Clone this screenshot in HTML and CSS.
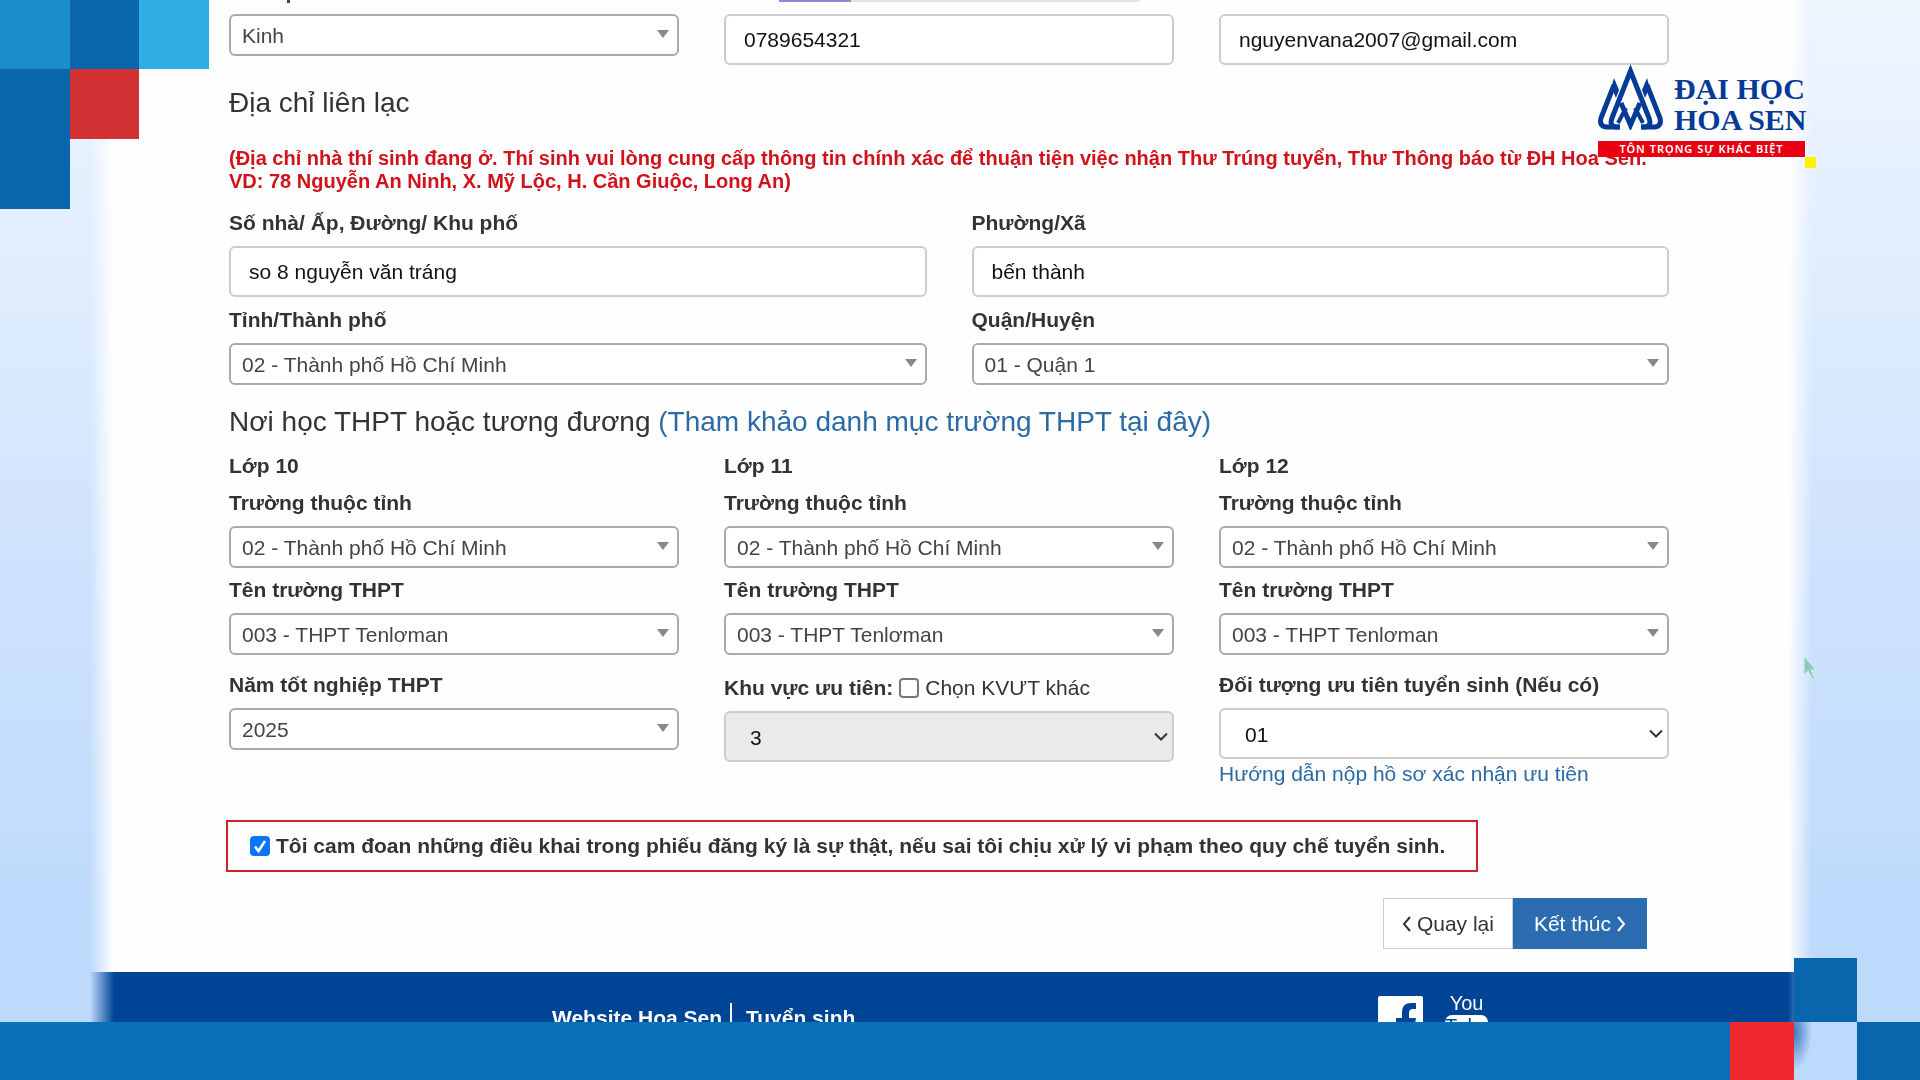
FILE: index.html
```html
<!DOCTYPE html>
<html lang="vi">
<head>
<meta charset="utf-8">
<meta name="viewport" content="width=device-width, initial-scale=1">
<title>Phiếu đăng ký - Đại học Hoa Sen</title>
<link rel="stylesheet" href="styles.css">
</head>
<body>
<div class="stage">
  <div class="panel">
    <form class="form">
      <div class="row three peek" aria-hidden="true">
        <span class="peek-dot"></span>
        <span class="peek-link"></span>
      </div>
      <div class="row three">
        <span class="pick"><select aria-label="Dân tộc"><option>Kinh</option></select></span>
        <input class="box" type="tel" aria-label="Điện thoại" value="0789654321">
        <input class="box" type="email" aria-label="Email" value="nguyenvana2007@gmail.com">
      </div>

      <h4 class="title first">Địa chỉ liên lạc</h4>
      <p class="note">(Địa chỉ nhà thí sinh đang ở. Thí sinh vui lòng cung cấp thông tin chính xác để thuận tiện việc nhận Thư Trúng tuyển, Thư Thông báo từ ĐH Hoa Sen.<br>VD: 78 Nguyễn An Ninh, X. Mỹ Lộc, H. Cần Giuộc, Long An)</p>

      <div class="row two address">
        <div class="field"><label for="street">Số nhà/ Ấp, Đường/ Khu phố</label><input class="box" id="street" type="text" value="so 8 nguyễn văn tráng"></div>
        <div class="field"><label for="ward">Phường/Xã</label><input class="box" id="ward" type="text" value="bến thành"></div>
        <div class="field"><label for="city">Tỉnh/Thành phố</label><span class="pick"><select id="city"><option>02 - Thành phố Hồ Chí Minh</option></select></span></div>
        <div class="field"><label for="district">Quận/Huyện</label><span class="pick"><select id="district"><option>01 - Quận 1</option></select></span></div>
      </div>

      <h4 class="title school">Nơi học THPT hoặc tương đương <a href="#">(Tham khảo danh mục trường THPT tại đây)</a></h4>

      <div class="row three grades">
        <div class="grade">
          <strong class="grade-name">Lớp 10</strong>
          <div class="field"><label for="p10">Trường thuộc tỉnh</label><span class="pick"><select id="p10"><option>02 - Thành phố Hồ Chí Minh</option></select></span></div>
          <div class="field"><label for="s10">Tên trường THPT</label><span class="pick"><select id="s10"><option>003 - THPT Tenlơman</option></select></span></div>
        </div>
        <div class="grade">
          <strong class="grade-name">Lớp 11</strong>
          <div class="field"><label for="p11">Trường thuộc tỉnh</label><span class="pick"><select id="p11"><option>02 - Thành phố Hồ Chí Minh</option></select></span></div>
          <div class="field"><label for="s11">Tên trường THPT</label><span class="pick"><select id="s11"><option>003 - THPT Tenlơman</option></select></span></div>
        </div>
        <div class="grade">
          <strong class="grade-name">Lớp 12</strong>
          <div class="field"><label for="p12">Trường thuộc tỉnh</label><span class="pick"><select id="p12"><option>02 - Thành phố Hồ Chí Minh</option></select></span></div>
          <div class="field"><label for="s12">Tên trường THPT</label><span class="pick"><select id="s12"><option>003 - THPT Tenlơman</option></select></span></div>
        </div>
      </div>

      <div class="row three priority">
        <div class="field"><label for="year">Năm tốt nghiệp THPT</label><span class="pick"><select id="year"><option>2025</option></select></span></div>
        <div class="field area">
          <div class="area-head"><label for="area">Khu vực ưu tiên:</label><input class="tick" id="other" type="checkbox"><label class="plain" for="other">Chọn KVƯT khác</label></div>
          <span class="pick native"><select id="area" disabled><option>3</option></select><svg class="chev" viewBox="0 0 14 9"><path d="M1 1.500 7 7.500 13 1.500"/></svg></span>
        </div>
        <div class="field">
          <label for="object">Đối tượng ưu tiên tuyển sinh (Nếu có)</label>
          <span class="pick native"><select id="object"><option>01</option></select><svg class="chev" viewBox="0 0 14 9"><path d="M1 1.500 7 7.500 13 1.500"/></svg></span>
          <a class="help" href="#">Hướng dẫn nộp hồ sơ xác nhận ưu tiên</a>
        </div>
      </div>

      <div class="pledge"><input class="tick" id="pledge" type="checkbox" checked><label for="pledge">Tôi cam đoan những điều khai trong phiếu đăng ký là sự thật, nếu sai tôi chịu xử lý vi phạm theo quy chế tuyển sinh.</label></div>

      <div class="actions">
        <button class="btn back" type="button"><svg viewBox="0 0 9 16"><path d="M8 1 2 8l6 7"/></svg>Quay lại</button>
        <button class="btn done" type="button">Kết thúc<svg viewBox="0 0 9 16"><path d="m1 1 6 7-6 7"/></svg></button>
      </div>
    </form>
    <footer class="footer">
      <nav class="links"><a href="#">Website Hoa Sen</a><span class="bar"></span><a href="#">Tuyển sinh</a></nav>
      <div class="social">
        <a href="#" aria-label="Facebook"><svg class="fb" viewBox="0 0 45 45"><path fill="#fff" d="M2 0h41q2 0 2 2v41q0 2-2 2H31V28h6l1-6h-7v-5q0-4 4-4h3V7h-5q-9 0-9 9v6h-6v6h6v17H2q-2 0-2-2V2q0-2 2-2z"/></svg></a>
        <a class="yt" href="#"><span class="you">You</span><span class="tube">Tube</span></a>
      </div>
    </footer>
  </div>

  <div class="mosaic" aria-hidden="true">
    <i class="sky"></i><i class="deep"></i><i class="light"></i>
    <i class="deep"></i><i class="red"></i><i></i>
    <i class="deep"></i>
  </div>

  <div class="logo">
    <div class="logo-top">
      <svg class="mark" viewBox="0 0 66 66" aria-hidden="true">
        <g fill="none" stroke="#063a97" stroke-width="5">
          <path d="M22 63h-4Q11 62 14 54L32.500 7 51 54Q54 62 47 63h-4"/>
          <path d="M23 39 32.500 61 42 39"/>
          <path d="M20 59 28 44M45 59 37 44" stroke-width="4"/>
          <path d="M21 63H8Q1 62 3 54L16 21"/>
          <path d="M44 63H57Q64 62 62 54L49 21"/>
        </g>
        <path fill="#063a97" d="M16 14l5 12-3 8-3-7-3 1zM49 14l-5 12 3 8 3-7 3 1z"/>
      </svg>
      <div class="logo-name">ĐẠI HỌC<br>HOA SEN</div>
    </div>
    <div class="motto">TÔN TRỌNG SỰ KHÁC BIỆT</div>
    <i class="dot"></i>
  </div>

  <svg class="cursor" viewBox="0 0 14 26" aria-hidden="true"><path d="M1 1v19l4-4 5 9 2-1-4-9h5z"/></svg>

  <div class="band" aria-hidden="true">
    <i class="band-blue"></i><i class="band-red"></i><i class="band-gap"></i><i class="band-deep"></i>
  </div>
</div>
</body>
</html>
```
FILE: styles.css
```css
* { box-sizing: border-box; }

body {
  margin: 0;
  color: #333;
  font: 21px/30px "Liberation Sans", Arial, sans-serif;
}

a { color: #2c6aa6; text-decoration: none; }
i { display: block; }

.stage {
  position: relative;
  height: 100vh;
  overflow: hidden;
  background: linear-gradient(#eef5ff, #e3effe 20%, #d0e3fd 50%, #bddafc 85%);
}

/* White sheet whose side edges fade into the backdrop */
.panel {
  margin: 0 108px 0 90px;
  background: #fefefe;
  -webkit-mask-image: linear-gradient(90deg, transparent, #000 24px, #000 calc(100% - 24px), transparent);
  mask-image: linear-gradient(90deg, transparent, #000 24px, #000 calc(100% - 24px), transparent);
}

.form { padding: 0 143px 23px 139px; }

.row { display: grid; column-gap: 45px; align-items: start; }
.two { grid-template-columns: 1fr 1fr; row-gap: 8px; }
.three { grid-template-columns: 1fr 1fr 1fr; }

.peek { height: 14px; }
.peek-dot { width: 3px; height: 3px; margin-left: 58px; background: #444; }
.peek-link {
  height: 2px;
  margin: 0 34px 0 55px;
  background: linear-gradient(90deg, #8f88d8 72px, #e4e4e4 72px);
}

.field { display: flex; flex-direction: column; }
label { font-weight: 700; margin-bottom: 8px; align-self: flex-start; }

.box, select {
  width: 100%;
  margin: 0;
  font: inherit;
  background: #fff;
  border-radius: 6px;
}
.box { height: 51px; padding: 0 18px; border: 2px solid #ccc; color: #111; }

.pick { position: relative; display: block; }
.pick::after {
  content: "";
  position: absolute;
  right: 10px;
  top: 16px;
  border: 6px solid transparent;
  border-top: 8px solid #888;
  border-bottom: 0;
}
select {
  display: block;
  appearance: none;
  height: 42px;
  padding: 2px 30px 0 11px;
  border: 2px solid #aaa;
  color: #444;
}
.native::after { content: none; }
.native select { height: 51px; padding-left: 24px; border-color: #ccc; color: #111; opacity: 1; }
.native select:disabled { background: #eaeaea; }
.chev { position: absolute; right: 6px; top: 21px; width: 14px; height: 9px; fill: none; stroke: #333; stroke-width: 2; }

.title { margin: 0; font-size: 28px; font-weight: 400; line-height: 30px; }
.first { margin-top: 23px; }
.note { margin: 29px 0 15px; color: #d0121b; font-size: 20px; font-weight: 700; line-height: 23px; }
.school { margin-top: 22px; }

.grades { margin-top: 14px; }
.grade { display: grid; row-gap: 7px; }
.priority { margin-top: 15px; }
.area { padding-top: 3px; }
.area-head { display: flex; align-items: center; margin-bottom: 8px; }
.area-head label { margin: 0; }
.area-head .plain { font-weight: 400; }

.tick {
  appearance: none;
  flex: none;
  width: 20px;
  height: 20px;
  margin: 0 6px;
  border: 2px solid #777;
  border-radius: 4px;
  background: #fff;
}
.tick:checked {
  border: 0;
  background: #0b76f5 url("data:image/svg+xml,%3Csvg xmlns='http://www.w3.org/2000/svg' viewBox='0 0 20 20'%3E%3Cpath d='M5 10.500 8.500 15 15 5' fill='none' stroke='white' stroke-width='2.500'/%3E%3C/svg%3E");
}

.pledge {
  display: flex;
  align-items: center;
  width: fit-content;
  height: 52px;
  margin: 31px 0 26px -3px;
  padding: 0 31px 0 16px;
  border: 2px solid #d0202a;
}
.pledge label { margin: 0; align-self: center; }

.actions { display: flex; justify-content: flex-end; padding-right: 22px; }
.btn {
  display: flex;
  align-items: center;
  gap: 6px;
  height: 51px;
  padding: 0 18px;
  border: 1px solid #ccc;
  background: #fff;
  color: #333;
  font: inherit;
}
.btn svg { width: 9px; height: 16px; fill: none; stroke: currentColor; stroke-width: 2; }
.done { padding: 0 20px; background: #2c6cb0; border-color: #2c6cb0; color: #fff; }

.footer {
  display: flex;
  justify-content: space-between;
  height: 84px;
  padding: 20px 324px 0 462px;
  background: #004595;
}
.links { display: flex; align-items: flex-start; padding-top: 11px; font-weight: 700; }
.links a { color: #fff; }
.bar { width: 2px; height: 26px; margin: 0 14px 0 8px; background: #fff; }
.social { display: flex; gap: 22px; }
.fb { display: block; width: 45px; height: 45px; margin-top: 4px; }
.yt { display: flex; flex-direction: column; align-items: center; color: #fff; font-size: 20px; line-height: 23px; }
.tube { width: 43px; height: 34px; border-radius: 7px; background: #fff; color: #004595; text-align: center; }

.mosaic {
  position: absolute;
  top: 0;
  left: 0;
  display: grid;
  grid-template-columns: 70px 69px 70px;
  grid-template-rows: 69px 70px 70px;
}
.sky { background: #1a8ccb; }
.deep { background: #0a66ac; }
.light { background: #30ade3; }
.red { background: #d33235; }

.logo { position: absolute; top: 64px; right: 115px; width: 207px; }
.logo-top { display: flex; gap: 10px; height: 77px; }
.mark { width: 66px; height: 66px; flex: none; }
.logo-name { padding-top: 9px; color: #063a97; font: 700 30px/31px "Liberation Serif", serif; white-space: nowrap; }
.motto { height: 16px; background: #e90010; color: #fff; font: 600 11px/16px "Noto Sans", sans-serif; letter-spacing: 1px; text-align: center; white-space: nowrap; }
.dot { width: 11px; height: 11px; margin-left: 207px; background: #fff200; }

.cursor { position: absolute; right: 103px; top: 655px; width: 14px; height: 26px; fill: #8ccbbb; stroke: #d5eef0; }

.band {
  position: absolute;
  left: 0;
  right: 0;
  bottom: 0;
  display: grid;
  grid-template-columns: 1fr 64px 63px 63px;
  height: 58px;
}
.band-blue { background: #0971b8; }
.band-red { background: #f0272f; }
.band-gap { position: relative; background: radial-gradient(ellipse 18px 38px at 0 10px, #3f78be, #bddafc); }
.band-gap::before { content: ""; position: absolute; left: 0; bottom: 100%; width: 63px; height: 64px; background: #0a66ac; }
.band-deep { background: #0a66ac; }
```
